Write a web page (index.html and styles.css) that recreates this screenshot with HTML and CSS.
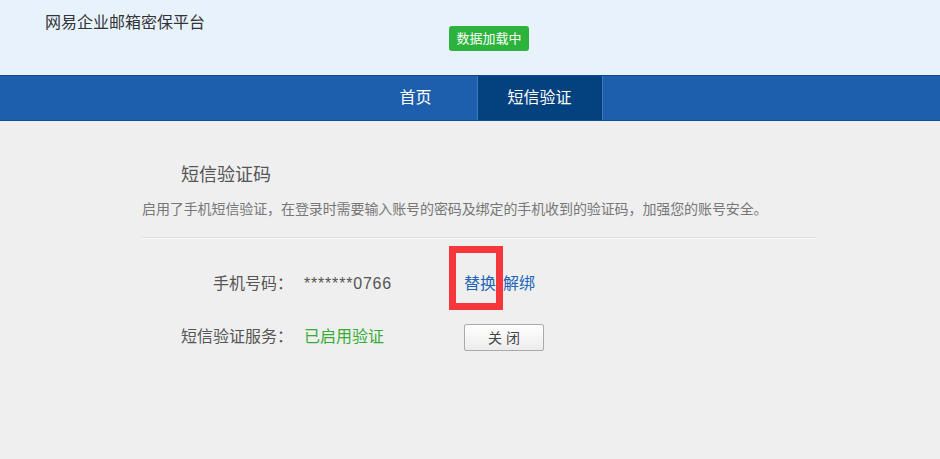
FILE: index.html
```html
<!DOCTYPE html>
<html>
<head>
    <meta charset="utf-8">
    <link rel="stylesheet" href="styles.css">
</head>
<body>
    <div class="header">
        <div class="site-title">网易企业邮箱密保平台</div>
        <span class="loading-badge">数据加载中</span>
    </div>

    <div class="nav">
        <a class="nav-item" href="#">首页</a>
        <a class="nav-item active" href="#">短信验证</a>
    </div>

    <div class="main">
        <h3 class="section-title">短信验证码</h3>
        <p class="section-desc">启用了手机短信验证，在登录时需要输入账号的密码及绑定的手机收到的验证码，加强您的账号安全。</p>
        <div class="divider"></div>

        <div class="info-row">
            <div class="info-label">手机号码：</div>
            <div class="info-value phone">*******0766</div>
            <div class="info-actions">
                <a class="link" href="#">替换</a><a class="link" href="#">解绑</a>
                <span class="mark-box"></span>
            </div>
        </div>

        <div class="info-row">
            <div class="info-label">短信验证服务：</div>
            <div class="info-value status-on">已启用验证</div>
            <div class="info-actions">
                <button class="btn-close">关 闭</button>
            </div>
        </div>
    </div>
</body>
</html>
```

FILE: styles.css
```css
body {
    margin: 0;
    background: #efefef;
    font-family: 'Liberation Sans', 'Noto Sans CJK SC', sans-serif;
    color: #555;
}

.header {
    display: flex;
    align-items: flex-start;
    height: 75px;
    background: #e8f2fd;
    border-bottom: 1px solid #0e4a90;
}

.site-title {
    flex: 0 0 449px;
    box-sizing: border-box;
    padding-left: 45px;
    margin-top: 13px;
    font-size: 16px;
    line-height: 20px;
    color: #333;
}

.loading-badge {
    display: inline-block;
    margin-top: 26px;
    width: 80px;
    height: 25px;
    line-height: 25px;
    text-align: center;
    background: #2cb33b;
    color: #fff;
    font-size: 13px;
    border-radius: 3px;
}

.nav {
    display: flex;
    height: 44px;
    padding-left: 354px;
    background: #1e5fad;
    border-bottom: 1px solid #114d92;
}

.nav-item {
    display: block;
    width: 123px;
    line-height: 44px;
    text-align: center;
    color: #fff;
    font-size: 16px;
    text-decoration: none;
    border-right: 1px solid #3a78c2;
}

.nav-item.active {
    background: #04427f;
    border-right: 1px solid #0a3d78;
    box-shadow: 1px 0 0 #3a78c2;
}

.main {
    width: 674px;
    margin-left: 142px;
    padding-top: 42px;
}

.section-title {
    margin: 0;
    padding-left: 39px;
    font-size: 18px;
    line-height: 24px;
    font-weight: normal;
    color: #555;
}

.section-desc {
    margin: 12px 0 0;
    font-size: 14px;
    line-height: 20px;
    letter-spacing: -0.1px;
    color: #777;
}

.divider {
    margin-top: 18px;
    height: 1px;
    background: #dcdcdc;
    border-bottom: 1px solid #fafafa;
    margin-bottom: 30px;
}

.info-row {
    display: flex;
    align-items: center;
    height: 30px;
    line-height: 22px;
    margin-bottom: 23px;
    font-size: 16px;
}

.info-label {
    width: 151px;
    text-align: right;
    color: #555;
}

.info-value {
    width: 160px;
    padding-left: 11px;
    color: #555;
}

.phone {
    letter-spacing: 0.8px;
}

.status-on {
    color: #35ad35;
}

.info-actions {
    position: relative;
    display: flex;
    align-items: center;
}

.link {
    color: #2365b9;
    text-decoration: none;
    margin-right: 7px;
}

.mark-box {
    position: absolute;
    left: -15px;
    top: -27px;
    width: 40px;
    height: 50px;
    border: 7px solid #f5363a;
}

.btn-close {
    width: 80px;
    height: 27px;
    padding: 0;
    border: 1px solid #aaa;
    border-radius: 2px;
    background: linear-gradient(#ffffff, #ececec);
    font-family: 'Liberation Sans', 'Noto Sans CJK SC', sans-serif;
    font-size: 14px;
    color: #444;
    cursor: pointer;
}
```
